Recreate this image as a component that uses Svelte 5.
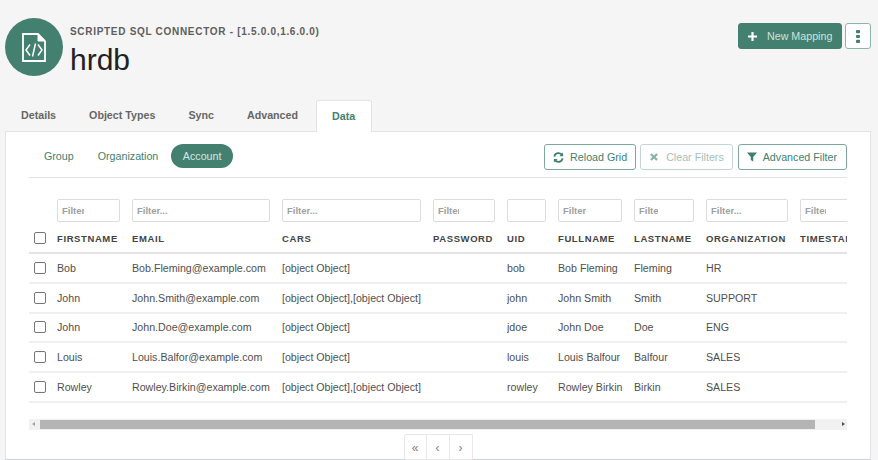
<script>
	const columns = [
		{ key: 'firstname', label: 'FIRSTNAME', width: 75, input: 63 },
		{ key: 'email', label: 'EMAIL', width: 150, input: 138 },
		{ key: 'cars', label: 'CARS', width: 151, input: 139 },
		{ key: 'password', label: 'PASSWORD', width: 74, input: 62 },
		{ key: 'uid', label: 'UID', width: 51, input: 39 },
		{ key: 'fullname', label: 'FULLNAME', width: 76, input: 64 },
		{ key: 'lastname', label: 'LASTNAME', width: 72, input: 60 },
		{ key: 'organization', label: 'ORGANIZATION', width: 94, input: 82 },
		{ key: 'timestamp', label: 'TIMESTAMP', width: 80, input: 62 }
	];

	const one = '[object Object]';
	const two = '[object Object],[object Object]';

	const rows = [
		{ firstname: 'Bob', email: 'Bob.Fleming@example.com', cars: one, uid: 'bob', fullname: 'Bob Fleming', lastname: 'Fleming', organization: 'HR' },
		{ firstname: 'John', email: 'John.Smith@example.com', cars: two, uid: 'john', fullname: 'John Smith', lastname: 'Smith', organization: 'SUPPORT' },
		{ firstname: 'John', email: 'John.Doe@example.com', cars: one, uid: 'jdoe', fullname: 'John Doe', lastname: 'Doe', organization: 'ENG' },
		{ firstname: 'Louis', email: 'Louis.Balfor@example.com', cars: one, uid: 'louis', fullname: 'Louis Balfour', lastname: 'Balfour', organization: 'SALES' },
		{ firstname: 'Rowley', email: 'Rowley.Birkin@example.com', cars: two, uid: 'rowley', fullname: 'Rowley Birkin', lastname: 'Birkin', organization: 'SALES' }
	];

	const tabs = ['Details', 'Object Types', 'Sync', 'Advanced', 'Data'];
	const objectTypes = ['Group', 'Organization', 'Account'];
</script>

<main>
	<header class="head">
		<div class="avatar">
			<svg width="24" height="29" viewBox="0 0 24 29" fill="none" stroke="#fff" stroke-width="1.8">
				<path d="M1 1h15l7 7v20H1z" />
				<path d="M16 1v7h7z" fill="#fff" stroke-width="1" />
				<path d="M8 11.5l-4 5.5 4 5.5M16 11.5l4 5.5-4 5.5M13.5 10.5l-3 13" stroke-width="1.5" />
			</svg>
		</div>
		<div class="titles">
			<div class="kicker">SCRIPTED SQL CONNECTOR - [1.5.0.0,1.6.0.0)</div>
			<h1>hrdb</h1>
		</div>
		<div class="actions">
			<button class="primary">
				<svg width="9" height="9" viewBox="0 0 10 10"><path d="M3.8 0h2.4v3.8H10v2.4H6.2V10H3.8V6.2H0V3.8h3.8z" fill="#fff" /></svg>
				<span>New Mapping</span>
			</button>
			<button class="kebab" aria-label="More">
				<svg width="4" height="13" viewBox="0 0 4 13" fill="#3f7f72"><rect y="0" width="4" height="3.2" rx="1" /><rect y="4.9" width="4" height="3.2" rx="1" /><rect y="9.8" width="4" height="3.2" rx="1" /></svg>
			</button>
		</div>
	</header>

	<nav class="tabs">
		{#each tabs as tab}
			<div class="tab" class:active={tab === 'Data'}>{tab}</div>
		{/each}
	</nav>

	<section class="card">
		<div class="toolbar">
			<div class="pills">
				{#each objectTypes as type}
					<div class="pill" class:on={type === 'Account'}>{type}</div>
				{/each}
			</div>
			<div class="tools">
				<button class="outline">
					<svg width="11" height="11" viewBox="0 0 12 12" fill="none" stroke="#3f7f72" stroke-width="2">
						<path d="M1.5 5A4.6 4.6 0 0 1 10 3.5M10.5 7A4.6 4.6 0 0 1 2 8.5" />
						<path d="M11 .5v4H7zM1 11.5v-4h4z" fill="#3f7f72" stroke="none" />
					</svg>
					<span>Reload Grid</span>
				</button>
				<button class="outline disabled">
					<svg width="8" height="8" viewBox="0 0 9 9" stroke="#3f7f72" stroke-width="2.4"><path d="M1 1l7 7M8 1L1 8" /></svg>
					<span>Clear Filters</span>
				</button>
				<button class="outline">
					<svg width="10" height="10" viewBox="0 0 10 10"><path d="M0 .5h10L6.2 5v4.5L3.8 8V5z" fill="#3f7f72" /></svg>
					<span>Advanced Filter</span>
				</button>
			</div>
		</div>

		<div class="grid-wrap">
			<table>
				<colgroup>
					<col style="width: 28px" />
					{#each columns as col}
						<col style="width: {col.width}px" />
					{/each}
				</colgroup>
				<thead>
					<tr class="filters">
						<th></th>
						{#each columns as col}
							<th><input class:narrow={col.key === 'uid'} style="width: {col.input}px" placeholder="Filter..." /></th>
						{/each}
					</tr>
					<tr class="labels">
						<th><span class="check"></span></th>
						{#each columns as col}
							<th>{col.label}</th>
						{/each}
					</tr>
				</thead>
				<tbody>
					{#each rows as row}
						<tr>
							<td><span class="check"></span></td>
							{#each columns as col}
								<td>{row[col.key] ?? ''}</td>
							{/each}
						</tr>
					{/each}
				</tbody>
			</table>
		</div>

		<div class="scrollbar">
			<span class="arrow left"></span>
			<div class="thumb"></div>
			<span class="arrow right"></span>
		</div>

		<div class="pager">
			<div class="page">«</div>
			<div class="page">‹</div>
			<div class="page">›</div>
		</div>
	</section>
</main>

<style>
	:global(body) {
		background: #f5f5f5;
		font-family: "Liberation Sans", Arial, sans-serif;
		color: #4f4f4f;
	}

	main {
		height: 460px;
		overflow: hidden;
		box-sizing: border-box;
		padding: 0 7px 0 5px;
	}

	.head {
		display: flex;
		align-items: flex-start;
		height: 100px;
		padding-top: 18px;
		box-sizing: border-box;
	}

	.avatar {
		width: 58px;
		height: 58px;
		border-radius: 50%;
		background: #43806f;
		display: flex;
		align-items: center;
		justify-content: center;
		flex: none;
	}

	.titles {
		margin-left: 7px;
		margin-top: 8px;
	}

	.kicker {
		font-size: 10px;
		font-weight: 700;
		letter-spacing: 0.7px;
		color: #5e5e5e;
		line-height: 12px;
	}

	h1 {
		margin: 5px 0 0;
		font-size: 30px;
		font-weight: 400;
		line-height: 34px;
		color: #212121;
	}

	.actions {
		margin-left: auto;
		margin-top: 5px;
		display: flex;
		gap: 3px;
	}

	button {
		font-family: inherit;
		font-size: 10.7px;
		box-sizing: border-box;
		cursor: pointer;
	}

	.primary {
		width: 104px;
		height: 26px;
		background: #43806f;
		border: 1px solid #43806f;
		border-radius: 3px;
		color: #cfe3dd;
		display: flex;
		align-items: center;
		padding: 0 0 0 9px;
		gap: 10px;
	}

	.kebab {
		width: 26px;
		height: 26px;
		background: #fff;
		border: 1px solid #8fb4aa;
		border-radius: 3px;
		padding: 0;
		display: flex;
		align-items: center;
		justify-content: center;
	}

	.tabs {
		display: flex;
		height: 31px;
	}

	.tab {
		padding: 0 16.5px;
		font-size: 10.7px;
		font-weight: 700;
		color: #666;
		line-height: 31px;
		height: 31px;
		box-sizing: border-box;
	}

	.tab:first-child {
		padding-left: 16px;
	}

	.tab.active {
		background: #fff;
		color: #43806f;
		border: 1px solid #e3e3e3;
		border-bottom: none;
		border-radius: 2px 2px 0 0;
		height: 32px;
		line-height: 30px;
		padding: 0 15.5px;
		margin-left: 1px;
		position: relative;
		z-index: 1;
	}

	.card {
		background: #fff;
		border: 1px solid #e3e3e3;
		border-bottom-color: #c9d3d8;
		height: 329px;
		box-sizing: border-box;
		padding: 0 23px;
		position: relative;
	}

	.toolbar {
		display: flex;
		justify-content: space-between;
		align-items: flex-start;
		height: 46px;
		padding-top: 12px;
		border-bottom: 1px solid #e3e3e3;
		box-sizing: border-box;
	}

	.pills {
		display: flex;
		margin-left: 3px;
	}

	.pill {
		font-size: 10.7px;
		line-height: 24px;
		height: 24px;
		padding: 0 12px;
		border-radius: 12px;
		color: #43806f;
	}

	.pill.on {
		background: #43806f;
		color: #d5e6e1;
		margin-left: 1px;
		padding: 0 11.5px;
	}

	.tools {
		display: flex;
		gap: 4px;
	}

	.outline {
		height: 26px;
		background: #fff;
		border: 1px solid #7fa89d;
		border-radius: 3px;
		color: #43806f;
		display: flex;
		align-items: center;
		gap: 6px;
		padding: 0 8px;
	}

	.outline:last-child {
		margin-left: 1px;
		padding-right: 9px;
	}

	.outline.disabled {
		border-color: #c3d6d1;
		color: #a3c2ba;
		padding-left: 9px;
		gap: 8px;
	}

	.outline.disabled svg {
		opacity: 0.6;
	}

	.grid-wrap {
		overflow: hidden;
		width: 818px;
	}

	table {
		border-collapse: collapse;
		table-layout: fixed;
		width: 851px;
	}

	th, td {
		text-align: left;
		padding: 0;
		overflow: hidden;
		white-space: nowrap;
	}

	.filters th {
		height: 47px;
		padding-top: 21px;
		box-sizing: border-box;
		vertical-align: top;
	}

	input {
		display: block;
		box-sizing: border-box;
		height: 23px;
		border: 1px solid #dcdcdc;
		border-radius: 2px;
		font-family: inherit;
		font-size: 9.5px;
		padding: 0 35px 0 4px;
		background: #fff;
	}

	input.narrow {
		padding-right: 33px;
	}

	input::placeholder {
		color: #a0a0a0;
		font-weight: 700;
	}

	.labels th {
		height: 28px;
		font-size: 9.5px;
		font-weight: 700;
		letter-spacing: 0.6px;
		color: #444;
		border-bottom: 2px solid #e3e3e3;
		padding-bottom: 1px;
		box-sizing: border-box;
	}

	td {
		height: 29.8px;
		font-size: 10.65px;
		color: #4f4f4f;
		border-bottom: 2px solid #efefef;
		box-sizing: border-box;
	}

	.check {
		display: block;
		width: 10px;
		height: 10px;
		margin-left: 5px;
		border: 1px solid #767676;
		border-radius: 2px;
		background: #fff;
	}

	.scrollbar {
		margin-top: 16px;
		width: 818px;
		height: 11px;
		background: #f1f1f1;
		display: flex;
		align-items: center;
		position: relative;
	}

	.thumb {
		position: absolute;
		left: 11px;
		width: 775px;
		top: 1px;
		bottom: 1px;
		background: #b4b4b4;
	}

	.arrow {
		position: absolute;
		top: 3px;
		border-top: 2.5px solid transparent;
		border-bottom: 2.5px solid transparent;
	}

	.arrow.left {
		left: 3px;
		border-right: 3px solid #a3a3a3;
	}

	.arrow.right {
		right: 2px;
		border-left: 3px solid #505050;
	}

	.pager {
		display: flex;
		justify-content: center;
		margin-top: 4px;
		width: 818px;
	}

	.page {
		width: 23px;
		height: 26px;
		border: 1px solid #e8e8e8;
		border-left-width: 0;
		box-sizing: border-box;
		text-align: center;
		line-height: 26px;
		font-size: 12px;
		color: #7d7d7d;
	}

	.page:first-child {
		border-left-width: 1px;
		border-radius: 2px 0 0 2px;
	}
</style>
